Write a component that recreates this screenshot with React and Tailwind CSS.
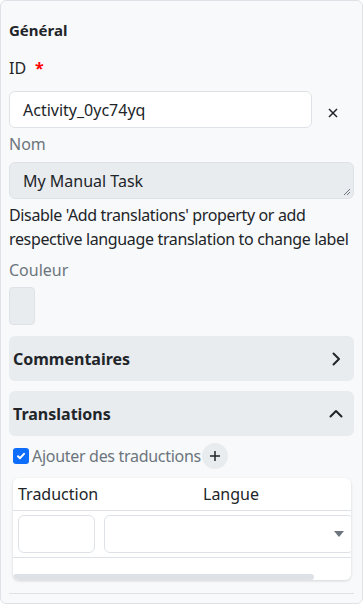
import React from "react";

function ChevronRight() {
  return (
    <svg width="16" height="16" viewBox="0 0 16 16" fill="none" stroke="#212529" strokeWidth="2" strokeLinecap="round" strokeLinejoin="round">
      <path d="M5.5 2.5 11 8l-5.5 5.5" />
    </svg>
  );
}
function ChevronUp() {
  return (
    <svg width="16" height="16" viewBox="0 0 16 16" fill="none" stroke="#212529" strokeWidth="2" strokeLinecap="round" strokeLinejoin="round">
      <path d="M2.5 10.5 8 5l5.5 5.5" />
    </svg>
  );
}

export default function App() {
  return (
    <div className="w-[363px] h-[604px] bg-white" style={{ fontFamily: '"Noto Sans", sans-serif' }}>
      <div className="h-[604px] border border-[#dee2e6] rounded-[6px] bg-[#f8f9fa] px-2 pt-[18px] overflow-hidden">
        <div className="text-[15px] font-bold text-[#212529] leading-[22px]">Général</div>

        <div className="mt-[15px] flex items-center text-[16px] text-[#212529] leading-[24px]">
          <span>ID</span>
          <span className="ml-[9px] text-[#ff0000] font-bold">*</span>
        </div>

        <div className="mt-[11px] flex items-center">
          <div className="w-[303px] h-[37px] bg-white border border-[#dee2e6] rounded-[6px] flex items-center pl-[13px] text-[16px] text-[#212529]">
            Activity_0yc74yq
          </div>
          <div className="ml-[15px] mt-[6px] text-[#212529]">
            <svg width="12" height="12" viewBox="0 0 12 12" stroke="#212529" strokeWidth="1.5">
              <path d="M2 2l8 8M10 2l-8 8" />
            </svg>
          </div>
        </div>

        <div className="mt-[4px] text-[16px] text-[#6c757d] leading-[24px]">Nom</div>
        <div className="mt-[6px] relative w-[345px] h-[37px] bg-[#e9ecef] border border-[#dee2e6] rounded-[6px] flex items-center pl-[13px] text-[16px] text-[#212529]">
          My Manual Task
          <svg className="absolute right-[2px] bottom-[2px]" width="8" height="8" viewBox="0 0 8 8" stroke="#6c757d" strokeWidth="1">
            <path d="M7 1 1 7M7 4 4 7" />
          </svg>
        </div>
        <div className="mt-[4px] text-[16px] text-[#212529] leading-[24px] tracking-[-0.35px]">
          Disable 'Add translations' property or add respective language translation to change label
        </div>

        <div className="mt-[7px] text-[16px] text-[#6c757d] leading-[24px]">Couleur</div>
        <div className="mt-[5px] w-[26px] h-[38px] bg-[#e9ecef] border border-[#dee2e6] rounded-[4px]"></div>

        <div className="mt-[11px] h-[45px] bg-[#e9ecef] rounded-[6px] flex items-center justify-between pl-[4px] pr-[10px]">
          <span className="text-[16px] font-bold text-[#212529]">Commentaires</span>
          <ChevronRight />
        </div>

        <div className="mt-[10px] h-[45px] bg-[#e9ecef] rounded-[6px] flex items-center justify-between pl-[4px] pr-[10px]">
          <span className="text-[16px] font-bold text-[#212529]">Translations</span>
          <ChevronUp />
        </div>

        <div className="mt-[7px] flex items-center pl-[4px] h-[26px]">
          <div className="w-[16px] h-[16px] bg-[#0d6efd] rounded-[3px] flex items-center justify-center">
            <svg width="10" height="10" viewBox="0 0 10 10" fill="none" stroke="white" strokeWidth="2" strokeLinecap="round" strokeLinejoin="round">
              <path d="M2 5.2 4 7.2 8 2.8" />
            </svg>
          </div>
          <span className="ml-[3px] text-[16px] text-[#6c757d] tracking-[-0.3px]">Ajouter des traductions</span>
          <div className="ml-[1px] w-[26px] h-[26px] rounded-full bg-[#e9ecef] flex items-center justify-center">
            <svg width="12" height="12" viewBox="0 0 12 12" stroke="#212529" strokeWidth="1.5">
              <path d="M6 1v10M1 6h10" />
            </svg>
          </div>
        </div>

        <div className="mt-[9px] ml-[4px] w-[338px] h-[102px] bg-white rounded-[6px] shadow-[0_1px_3px_rgba(0,0,0,0.15)] overflow-hidden flex flex-col">
          <div className="h-[33px] flex items-center border-b border-[#dee2e6] text-[16px] text-[#212529]">
            <span className="pl-[5px] w-[190px]">Traduction</span>
            <span>Langue</span>
          </div>
          <div className="h-[47px] flex items-center border-b border-[#dee2e6] pl-[5px] gap-[9px]">
            <div className="w-[77px] h-[38px] border border-[#dee2e6] rounded-[6px] shrink-0"></div>
            <div className="w-[250px] h-[38px] border border-[#dee2e6] rounded-[6px] shrink-0 flex items-center justify-end pr-[9px]">
              <svg width="10" height="6" viewBox="0 0 10 6"><path d="M0 0h10L5 6z" fill="#6c757d" /></svg>
            </div>
          </div>
          <div className="flex-1 flex items-end">
            <div className="w-[301px] h-[6px] bg-[#dee2e6] rounded-full"></div>
          </div>
        </div>

        <div className="mt-[13px] h-px bg-[#dee2e6]"></div>
      </div>
    </div>
  );
}
